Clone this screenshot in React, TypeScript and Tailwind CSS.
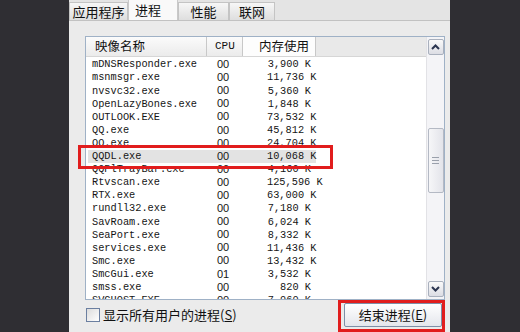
import React from "react";

const rows: [string, string, string][] = [
    ["mDNSResponder.exe", "00", "3,900 K"],
    ["msnmsgr.exe", "00", "11,736 K"],
    ["nvsvc32.exe", "00", "5,360 K"],
    ["OpenLazyBones.exe", "00", "1,848 K"],
    ["OUTLOOK.EXE", "00", "73,532 K"],
    ["QQ.exe", "00", "45,812 K"],
    ["QQ.exe", "00", "24,704 K"],
    ["QQDL.exe", "00", "10,068 K"],
    ["QQPlTrayBar.exe", "00", "4,160 K"],
    ["Rtvscan.exe", "00", "125,596 K"],
    ["RTX.exe", "00", "63,000 K"],
    ["rundll32.exe", "00", "7,180 K"],
    ["SavRoam.exe", "00", "6,024 K"],
    ["SeaPort.exe", "00", "8,332 K"],
    ["services.exe", "00", "11,436 K"],
    ["Smc.exe", "00", "13,432 K"],
    ["SmcGui.exe", "01", "3,532 K"],
    ["smss.exe", "00", "820 K"],
    ["SVCHOST.EXE", "00", "7,960 K"],
];

const cjk = "font-['Noto_Sans_CJK_SC',sans-serif]";
const mono = "font-['Liberation_Mono',monospace]";

function Chevron({ up }: { up?: boolean }) {
    return (
        <svg width="9" height="6" viewBox="0 0 9 6">
            <path
                d={up ? "M1 5 L4.5 1.5 L8 5" : "M1 1 L4.5 4.5 L8 1"}
                fill="none"
                stroke="#2b3550"
                strokeWidth="2"
            />
        </svg>
    );
}

function Tab({ label, active }: { label: string; active?: boolean }) {
    return (
        <div
            className={
                active
                    ? "flex h-[21px] w-[50px] items-start whitespace-nowrap border-x border-t border-[#c9c9c9] bg-[#f9f9f9] pl-[6px] pt-[1px] text-[13px] leading-[17px] text-[#111]"
                    : "mt-[3px] flex h-[18px] w-full items-center justify-center whitespace-nowrap border border-b-0 border-[#c4c4c4] bg-gradient-to-b from-[#f7f7f7] to-[#dedede] text-[13px] text-[#111]"
            }
        >
            {label}
        </div>
    );
}

export default function App() {
    return (
        <div className="flex h-[332px] w-[520px] overflow-hidden bg-[#2f2e33]">
            <div className="w-[69px]" />
            <div className={`relative flex w-[381px] flex-col bg-[#ebebeb] ${cjk}`}>
                {/* tabs */}
                <div className="flex h-[21px] items-end border-b border-[#c2c2c2] bg-[#e4e4e4]">
                    <div className="flex w-[59px]">
                        <Tab label="应用程序" />
                    </div>
                    <Tab label="进程" active />
                    <div className="flex w-[51px]">
                        <Tab label="性能" />
                    </div>
                    <div className="flex w-[46px]">
                        <Tab label="联网" />
                    </div>
                </div>

                {/* list box */}
                <div className="ml-[16px] mr-[5px] mt-[15px] flex h-[264px] border border-[#9fb1c6] bg-white">
                    <div className="flex min-w-0 flex-1 flex-col overflow-hidden">
                        <div className="flex h-[20px] shrink-0 items-center border-b border-[#d6d6d6] bg-gradient-to-b from-[#fbfbfb] to-[#ebebeb] text-[12.5px] text-[#111]">
                            <div className="flex h-full w-[121px] items-center border-r border-[#c8c8c8] pl-[9px]">
                                映像名称
                            </div>
                            <div className={`flex h-full w-[36px] items-center border-r border-[#c8c8c8] pl-[8px] ${mono} text-[11px]`}>
                                CPU
                            </div>
                            <div className="flex h-full w-[73px] items-center border-r border-[#c8c8c8] bg-[#fdfdfd] pl-[16px]">
                                内存使用
                            </div>
                            <div className="h-full flex-1 bg-[#e9e9e9]" />
                        </div>
                        <div className={`pt-[1px] ${mono} text-[10.3px] text-[#151515]`}>
                            {rows.map(([name, cpu, mem], i) => (
                                <div
                                    key={i}
                                    className={
                                        "ml-[2px] flex h-[13.1px] w-[228px] items-center leading-none " +
                                        (name === "QQDL.exe" ? "bg-[#e3e3e3]" : "")
                                    }
                                >
                                    <div className="w-[129px] pl-[4px]">{name}</div>
                                    <div className="w-[50px] font-['Liberation_Sans',sans-serif] text-[11px]">{cpu}</div>
                                    <div className="w-[44px] whitespace-nowrap text-right">{mem}</div>
                                </div>
                            ))}
                        </div>
                    </div>

                    {/* scrollbar */}
                    <div className="flex w-[18px] shrink-0 flex-col items-center border-l border-[#e2e2e6] bg-[#f4f4f7] pt-[2px] pb-[2px]">
                        <div className="flex h-[16px] w-[16px] items-center justify-center rounded-[2px] border border-[#a9b0bd] bg-gradient-to-b from-[#fafafa] to-[#dcdde4]">
                            <Chevron up />
                        </div>
                        <div className="h-[73px]" />
                        <div className="flex h-[65px] w-[16px] flex-col items-center justify-center gap-[2px] rounded-[2px] border border-[#b4b9c4] bg-gradient-to-r from-[#f6f6f8] to-[#e3e4ea]">
                            <div className="h-px w-[7px] bg-[#9aa0ab]" />
                            <div className="h-px w-[7px] bg-[#9aa0ab]" />
                            <div className="h-px w-[7px] bg-[#9aa0ab]" />
                        </div>
                        <div className="flex-1" />
                        <div className="flex h-[16px] w-[16px] items-center justify-center rounded-[2px] border border-[#a9b0bd] bg-gradient-to-b from-[#fafafa] to-[#dcdde4]">
                            <Chevron />
                        </div>
                    </div>
                </div>

                {/* bottom row */}
                <div className="flex flex-1 items-start pl-[17px] pr-[8px] pt-[3px]">
                    <div className="mt-[5px] h-[14px] w-[14px] border border-[#6b7fa0] bg-gradient-to-br from-[#dcdcdc] to-white" />
                    <div className="ml-[3px] mt-[3px] text-[13px] leading-[18px] text-[#111]">
                        显示所有用户的进程(<span className="underline">S</span>)
                    </div>
                    <div className="flex-1" />
                    <div className="flex h-[24px] w-[98px] items-center justify-center rounded-[2px] border border-[#7d8fa8] bg-gradient-to-b from-white to-[#e4e6ec] text-[13px] text-[#111]">
                        结束进程(<span className="underline">E</span>)
                    </div>
                </div>

                {/* red annotation boxes */}
                <div className="pointer-events-none absolute left-[9px] top-[145px] h-[24px] w-[255px] border-[3px] border-[#e11d1d]" />
                <div className="pointer-events-none absolute left-[269px] top-[300px] h-[32px] w-[107px] border-[3px] border-[#e11d1d]" />
            </div>
            <div className="flex-1" />
        </div>
    );
}
